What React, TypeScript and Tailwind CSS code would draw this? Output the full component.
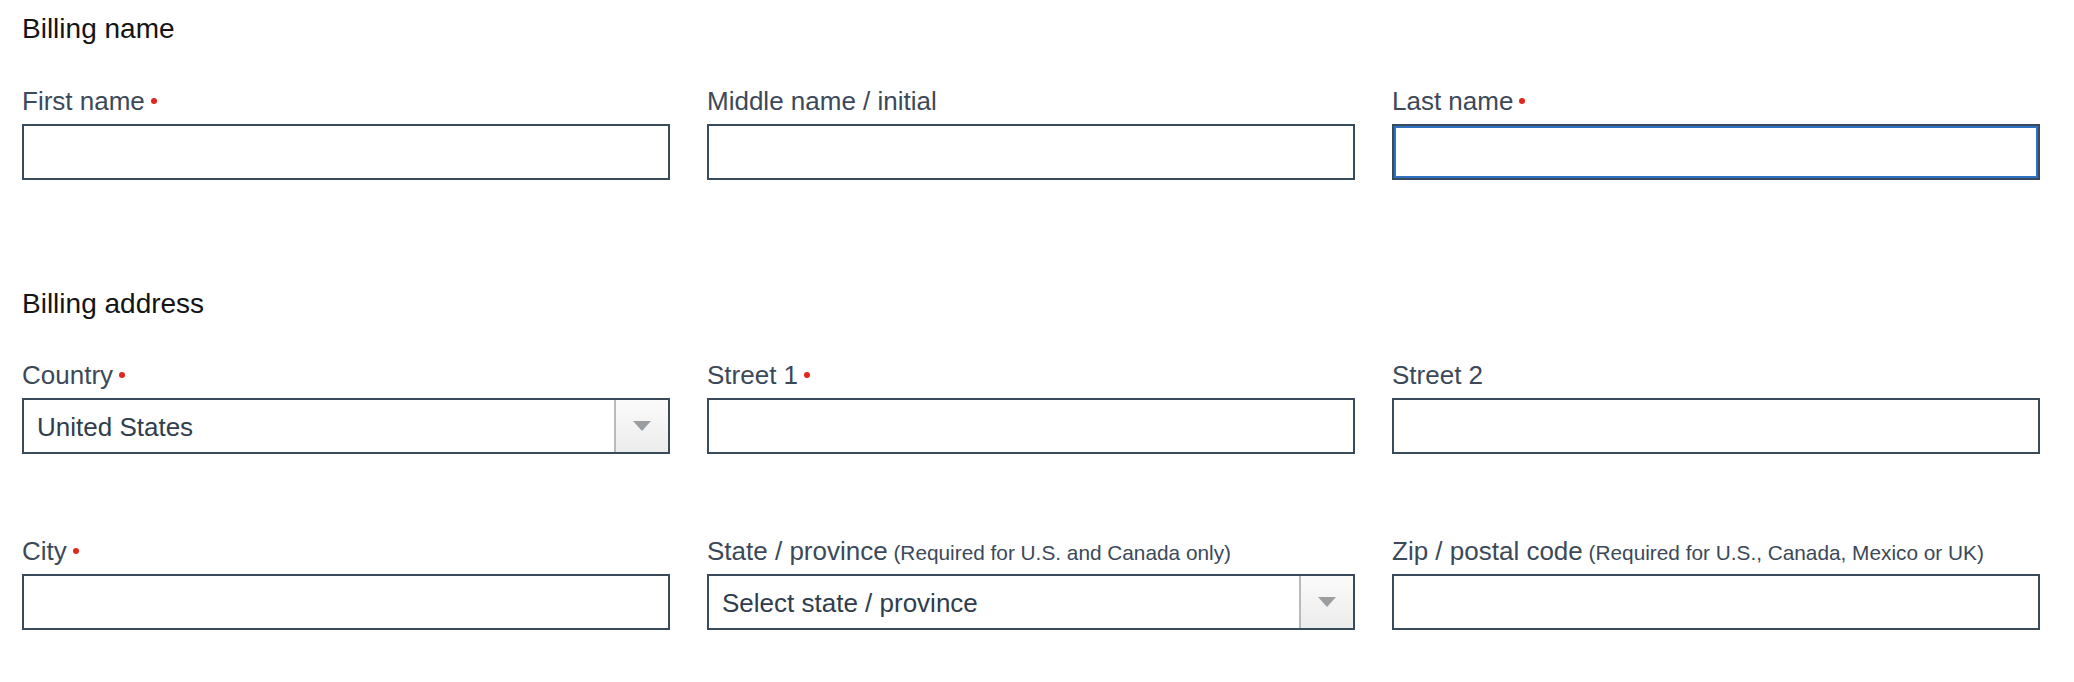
import type { ReactNode } from "react";

const FONT = "font-['Liberation_Sans',Arial,Helvetica,sans-serif]";

function Field({ label, hint, required, children }: { label: string; hint?: string; required?: boolean; children: ReactNode }) {
  return (
    <div className="flex flex-col">
      <div className="h-[32px] whitespace-nowrap text-[26px] leading-[32px] text-[#3b4959]">
        {label}
        {hint && <span className="text-[20.8px]"> {hint}</span>}
        {required && <span className="ml-[6px] inline-block h-[6px] w-[6px] -translate-y-[2px] rounded-full bg-[#e1261c] align-middle" />}
      </div>
      <div className="mt-[7px]">{children}</div>
    </div>
  );
}

function TextInput({ focused }: { focused?: boolean }) {
  return (
    <input
      type="text"
      className={
        focused
          ? "block h-[56px] w-full border-2 border-[#394a5b] bg-white px-[13px] text-[26px] text-[#2f3d4c] shadow-[inset_0_0_0_2px_#2f72c4] outline-none"
          : "block h-[56px] w-full border-2 border-[#394a5b] bg-white px-[13px] text-[26px] text-[#2f3d4c] outline-none"
      }
    />
  );
}

function SelectBox({ value }: { value: string }) {
  return (
    <div className="flex h-[56px] w-full items-stretch border-2 border-[#394a5b] bg-white">
      <div className="flex flex-1 items-center px-[13px] pt-[2px] text-[26px] text-[#2f3d4c]">{value}</div>
      <div className="flex w-[54px] items-center justify-center border-l-2 border-[#b7bbbf] bg-linear-to-b from-[#fbfbfb] to-[#ececec]">
        <svg width="18" height="10" viewBox="0 0 18 10">
          <path d="M0 0 H18 L9 10 Z" fill="#9b9ea1" />
        </svg>
      </div>
    </div>
  );
}

export default function App() {
  return (
    <div className={`${FONT} min-h-[682px] bg-white pl-[22px] pr-[34px] pt-[9px]`}>
      <h2 className="h-[40px] text-[28px] leading-[40px] text-[#141414]">Billing name</h2>

      <div className="mt-[36px] grid grid-cols-3 gap-x-[37px]">
        <Field label="First name" required>
          <TextInput />
        </Field>
        <Field label="Middle name / initial">
          <TextInput />
        </Field>
        <Field label="Last name" required>
          <TextInput focused />
        </Field>
      </div>

      <h2 className="mt-[104px] h-[40px] text-[28px] leading-[40px] text-[#141414]">Billing address</h2>

      <div className="mt-[35px] grid grid-cols-3 gap-x-[37px] gap-y-[81px]">
        <Field label="Country" required>
          <SelectBox value="United States" />
        </Field>
        <Field label="Street 1" required>
          <TextInput />
        </Field>
        <Field label="Street 2">
          <TextInput />
        </Field>
        <Field label="City" required>
          <TextInput />
        </Field>
        <Field label="State / province" hint="(Required for U.S. and Canada only)">
          <SelectBox value="Select state / province" />
        </Field>
        <Field label="Zip / postal code" hint="(Required for U.S., Canada, Mexico or UK)">
          <TextInput />
        </Field>
      </div>
    </div>
  );
}
